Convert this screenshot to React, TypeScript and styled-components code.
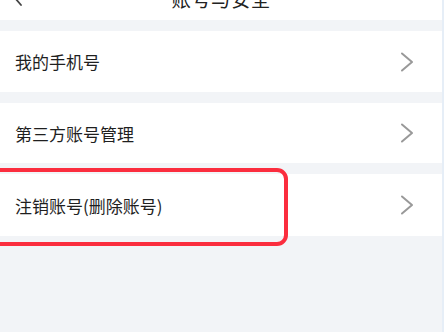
import React from "react";
import styled, { createGlobalStyle } from "styled-components";

const GlobalStyle = createGlobalStyle`
  html, body {
    margin: 0;
    padding: 0;
    background: #f2f4f7;
    font-family: "Noto Sans CJK SC", "Noto Sans", sans-serif;
  }
`;

const Screen = styled.div`
  position: relative;
  width: 444px;
  height: 332px;
  overflow: hidden;
  background: #f2f4f7;
  box-sizing: border-box;
  border-right: 2px solid #e6eef7;
`;

const Header = styled.div`
  position: relative;
  height: 44px;
  margin-top: -24px;
  background: #ffffff;
  display: flex;
  align-items: center;
  justify-content: center;
`;

const BackButton = styled.div`
  position: absolute;
  left: 12px;
  top: 50%;
  transform: translateY(-50%);
  display: flex;
  color: #333333;
`;

const Title = styled.div`
  font-size: 19.5px;
  color: #222222;
  letter-spacing: 0.3px;
`;

const List = styled.div`
  display: flex;
  flex-direction: column;
  gap: 11px;
  padding-top: 11px;
`;

const Row = styled.div<{ $height: number }>`
  height: ${(p) => p.$height}px;
  background: #ffffff;
  display: flex;
  align-items: center;
  justify-content: space-between;
  padding: 0 28px 0 15px;
`;

const Label = styled.span`
  font-size: 17px;
  color: #1f1f1f;
`;

const Highlight = styled.div`
  position: absolute;
  left: -20px;
  top: 168px;
  width: 308px;
  height: 78px;
  box-sizing: border-box;
  border: 4.5px solid #fb2d3e;
  border-radius: 11px;
  pointer-events: none;
`;

const Chevron = () => (
  <svg width="14" height="20" viewBox="0 0 14 20" fill="none">
    <path
      d="M2 1.5 L12 10 L2 18.5"
      stroke="#999999"
      strokeWidth="2"
      strokeLinecap="round"
      strokeLinejoin="round"
    />
  </svg>
);

const rows = [
  { label: "我的手机号", height: 61 },
  { label: "第三方账号管理", height: 60 },
  { label: "注销账号(删除账号)", height: 62 },
];

export default function App() {
  return (
    <>
      <GlobalStyle />
      <Screen>
        <Header>
          <BackButton>
            <svg width="12" height="16" viewBox="0 0 12 16" fill="none">
              <path
                d="M9 1 L3 8 L9 15"
                stroke="#444"
                strokeWidth="1.8"
                strokeLinecap="round"
                strokeLinejoin="round"
              />
            </svg>
          </BackButton>
          <Title>账号与安全</Title>
        </Header>
        <List>
          {rows.map((r) => (
            <Row key={r.label} $height={r.height}>
              <Label>{r.label}</Label>
              <Chevron />
            </Row>
          ))}
        </List>
        <Highlight />
      </Screen>
    </>
  );
}
